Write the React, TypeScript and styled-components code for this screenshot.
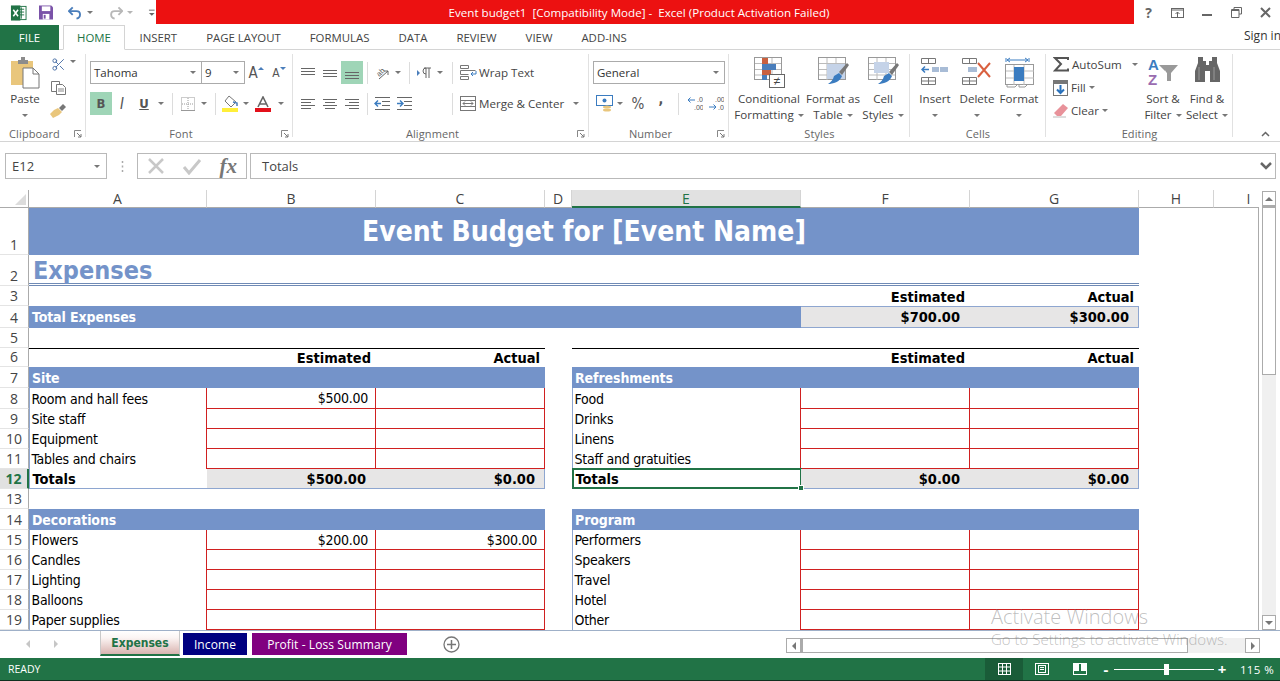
import React from "react";
import styled, { createGlobalStyle, css } from "styled-components";
import { Scissors } from "lucide-react";

const UI_FONT = `"Open Sans", "Noto Sans", sans-serif`;
const CELL_FONT = `"DejaVu Sans Condensed", "DejaVu Sans", sans-serif`;
const BAND = "#7493c9";
const RED = "#d02020";
const EDGE = "#8ea6d0";
const GREEN = "#217346";

const GlobalStyle = createGlobalStyle`
  html, body { margin: 0; padding: 0; background: #fff; overflow: hidden; }
  * { box-sizing: border-box; }
`;

const Window = styled.div`
  position: relative;
  width: 1280px;
  height: 681px;
  display: flex;
  flex-direction: column;
  overflow: hidden;
  font-family: ${UI_FONT};
  font-size: 11.6px;
  color: #444;
`;

/* title bar */
const TitleBar = styled.div`
  height: 25px;
  display: flex;
  align-items: stretch;
`;
const Qat = styled.div`
  width: 156px;
  display: flex;
  align-items: center;
`;
const RedTitle = styled.div`
  flex: 1;
  height: 24px;
  background: #ec1111;
  color: #fff;
  display: flex;
  align-items: center;
  justify-content: center;
  white-space: pre;
  padding-right: 12px;
`;
const WinControls = styled.div`
  width: 146px;
  display: flex;
  align-items: center;
  padding-left: 0;
`;

const Slot = styled.div<{ $w: number; $active?: boolean }>`
  width: ${(p) => p.$w}px;
  height: 23px;
  flex: none;
  display: flex;
  align-items: center;
  justify-content: center;
  ${(p) => p.$active && `background: #9fd5b7;`}
`;
const Caret = styled.span<{ $light?: boolean }>`
  display: inline-block;
  width: 0;
  height: 0;
  border-left: 3px solid transparent;
  border-right: 3px solid transparent;
  border-top: 3px solid ${(p) => (p.$light ? "#b5b5b5" : "#777")};
`;
const GrowCaret = styled.span<{ $up?: boolean }>`
  width: 0;
  height: 0;
  margin-bottom: 9px;
  border-left: 3px solid transparent;
  border-right: 3px solid transparent;
  ${(p) => (p.$up ? `border-bottom: 3px solid #4a7ebb;` : `border-top: 3px solid #4a7ebb;`)}
`;
const Sep = styled.span`
  width: 1px;
  height: 22px;
  background: #dcdcdc;
`;

/* ribbon tabs */
const TabRow = styled.div`
  height: 25px;
  display: flex;
  align-items: stretch;
  border-bottom: 1px solid #d4d4d4;
  font-size: 11.4px;
`;
const FileTab = styled.div`
  width: 59px;
  margin-right: 4px;
  background: ${GREEN};
  color: #fff;
  display: flex;
  align-items: center;
  justify-content: center;
  margin-bottom: -1px;
`;
const RibbonTab = styled.div<{ $on?: boolean }>`
  padding: 0 14.5px;
  display: flex;
  align-items: center;
  ${(p) =>
    p.$on &&
    css`
      color: ${GREEN};
      background: #fff;
      border: 1px solid #d4d4d4;
      border-bottom: 1px solid #fff;
      height: 25px;
      padding: 0;
      justify-content: center;
      width: 62px;
    `}
`;
const SignIn = styled.div`
  margin-left: auto;
  display: flex;
  align-items: center;
  color: #333;
  white-space: nowrap;
  width: 36px;
  margin-top: -4px;
  font-size: 12px;
`;

/* ribbon */
const Ribbon = styled.div`
  height: 92px;
  display: flex;
  border-bottom: 1px solid #d4d4d4;
  position: relative;
`;
const Group = styled.div<{ $w: number }>`
  width: ${(p) => p.$w}px;
  flex: none;
  display: flex;
  flex-direction: column;
  position: relative;
  &::after {
    content: "";
    position: absolute;
    right: 0;
    top: 4px;
    bottom: 4px;
    width: 1px;
    background: #e1e1e1;
  }
`;
const GroupBody = styled.div`
  height: 75px;
  display: flex;
`;
const GroupFooter = styled.div<{ $launch?: boolean }>`
  flex: 1;
  display: flex;
  align-items: center;
  justify-content: center;
  position: relative;
  color: #666;
  font-size: 11px;
  letter-spacing: 0.1px;
  padding-top: 2px;
  padding-right: ${(p) => (p.$launch ? 17 : 0)}px;
`;
const Launcher = styled.svg`
  position: absolute;
  right: 4px;
  top: 6px;
`;
const ToolRows = styled.div<{ $left?: number }>`
  display: flex;
  flex-direction: column;
  gap: 8px;
  padding: 11px 0 0 ${(p) => p.$left ?? 4}px;
`;
const ToolRow = styled.div`
  display: flex;
  align-items: center;
  height: 23px;
`;
const Combo = styled.div<{ $w: number }>`
  width: ${(p) => p.$w}px;
  height: 23px;
  border: 1px solid #ababab;
  display: flex;
  align-items: center;
  justify-content: space-between;
  padding: 0 5px 0 3px;
  color: #333;
  font-size: 11.5px;
  margin-right: -1px;
`;
const Spacer = styled.div<{ $w: number }>`
  width: ${(p) => p.$w}px;
  flex: none;
`;
const ToolLabel = styled.span`
  white-space: nowrap;
  color: #444;
`;
const Glyph = styled.span<{ $bold?: boolean; $italic?: boolean; $under?: boolean; $size?: number; $raise?: number }>`
  font-family: ${CELL_FONT};
  font-size: ${(p) => p.$size ?? 13}px;
  font-weight: ${(p) => (p.$bold ? 700 : 400)};
  font-style: ${(p) => (p.$italic ? "italic" : "normal")};
  text-decoration: ${(p) => (p.$under ? "underline" : "none")};
  color: #555;
  margin-bottom: ${(p) => p.$raise ?? 0}px;
`;
const BigButton = styled.div<{ $w: number }>`
  width: ${(p) => p.$w}px;
  flex: none;
  display: flex;
  flex-direction: column;
  align-items: center;
  padding-top: 7px;
  white-space: nowrap;
`;
const BigIcon = styled.div`
  height: 33px;
  display: flex;
  align-items: flex-start;
  justify-content: center;
  margin-bottom: 1px;
`;
const BigLine = styled.div`
  height: 16px;
  line-height: 16px;
  display: flex;
  align-items: center;
  gap: 4px;
  color: #444;
`;
const MiniStack = styled.div<{ $w: number }>`
  width: ${(p) => p.$w}px;
  flex: none;
  display: flex;
  flex-direction: column;
  gap: 9px;
  padding-top: 7px;
  align-items: center;
`;
const EditStack = styled.div<{ $w: number }>`
  width: ${(p) => p.$w}px;
  flex: none;
  padding: 3px 0 0 7px;
  display: flex;
  flex-direction: column;
`;
const EditRow = styled.div`
  height: 23px;
  display: flex;
  align-items: center;
  gap: 3px;
  svg {
    flex: none;
  }
`;
const Collapse = styled.svg`
  position: absolute;
  left: 1261px;
  top: 81px;
`;

/* formula bar */
const FormulaBar = styled.div`
  height: 48px;
  display: flex;
  align-items: flex-start;
  padding: 11px 4px 0 5px;
`;
const NameBox = styled.div`
  width: 102px;
  height: 26px;
  border: 1px solid #b9b9b9;
  display: flex;
  align-items: center;
  justify-content: space-between;
  padding: 0 6px 0 6px;
  color: #444;
  font-size: 13px;
`;
const Dots = styled.div`
  width: 30px;
  height: 26px;
  display: flex;
  align-items: center;
  justify-content: center;
`;
const FxBox = styled.div`
  width: 110px;
  height: 26px;
  border: 1px solid #b9b9b9;
  display: flex;
  align-items: center;
  justify-content: space-between;
  padding: 0 9px 0 9px;
  margin-right: 3px;
`;
const FxText = styled.span`
  font-family: "Liberation Serif", serif;
  font-style: italic;
  font-weight: 700;
  font-size: 21px;
  color: #777;
`;
const FormulaInput = styled.div`
  flex: 1;
  height: 26px;
  border: 1px solid #b9b9b9;
  display: flex;
  align-items: center;
  justify-content: space-between;
  padding: 0 2px 0 11px;
  font-size: 13px;
  color: #444;
`;

/* sheet */
const SheetArea = styled.div`
  height: 440px;
  display: flex;
`;
const SheetGrid = styled.div`
  width: 1259px;
  flex: none;
  position: relative;
  display: grid;
  grid-template-columns: 29px 178px 169px 169px 27px 229px 169px 169px 75px 70px;
  grid-template-rows: 18px 47px 31px 20px 22px 20px 19px 21px 21px 20px 20px 20px 20px 20px 21px 20px 20px 20px 20px 20px;
  overflow: hidden;
  &::after {
    content: "";
    position: absolute;
    right: 0;
    top: 17px;
    bottom: 0;
    width: 1px;
    background: #ababab;
  }
`;
const Corner = styled.div`
  border-bottom: 1px solid #ababab;
  border-right: 1px solid #ababab;
  display: flex;
  align-items: flex-end;
  justify-content: flex-end;
  padding: 0 2px 2px 0;
`;
const ColHead = styled.div<{ $on?: boolean }>`
  display: flex;
  align-items: center;
  justify-content: center;
  font-size: 14px;
  color: #444;
  border-right: 1px solid #d4d4d4;
  border-bottom: 1px solid #ababab;
  ${(p) =>
    p.$on &&
    css`
      background: #e1e1e1;
      color: ${GREEN};
      border-bottom: 2px solid ${GREEN};
    `}
`;
const RowHead = styled.div<{ $on?: boolean }>`
  display: flex;
  align-items: flex-end;
  justify-content: center;
  font-size: 14px;
  line-height: 19px;
  color: #444;
  border-right: 1px solid #ababab;
  border-bottom: 1px solid #e4e4e4;
  ${(p) =>
    p.$on &&
    css`
      background: #e1e1e1;
      color: ${GREEN};
      font-weight: 700;
      border-right: 2px solid ${GREEN};
    `}
`;

type Kind =
  | "blank"
  | "title"
  | "heading"
  | "head"
  | "headTop"
  | "ruled"
  | "band"
  | "summary"
  | "summaryEnd"
  | "label"
  | "data"
  | "rowTotal"
  | "sum"
  | "sumEnd";

const kinds: Record<Kind, ReturnType<typeof css>> = {
  blank: css``,
  title: css`
    background: ${BAND};
    color: #fff;
    font-weight: 700;
    font-size: 28px;
    justify-content: center;
  `,
  heading: css`
    color: ${BAND};
    font-weight: 700;
    font-size: 25px;
    padding: 2px 0 0 4px;
    align-items: center;
    border-bottom: 3px double #6f8ab5;
  `,
  head: css`
    font-size: 14.5px;
    font-weight: 700;
    justify-content: flex-end;
    padding: 1px 5px 0 0;
  `,
  headTop: css`
    font-size: 14.5px;
    font-weight: 700;
    justify-content: flex-end;
    padding-right: 5px;
    border-top: 1px solid #000;
  `,
  ruled: css`
    border-top: 1px solid #000;
  `,
  band: css`
    background: ${BAND};
    color: #fff;
    font-size: 14px;
    font-weight: 700;
    letter-spacing: -0.1px;
    padding-left: 3px;
  `,
  summary: css`
    background: #e7e6e6;
    font-size: 14.5px;
    font-weight: 700;
    justify-content: flex-end;
    padding-right: 10px;
    border-bottom: 1px solid ${EDGE};
    border-top: 1px solid ${EDGE};
  `,
  summaryEnd: css`
    background: #e7e6e6;
    font-size: 14.5px;
    font-weight: 700;
    justify-content: flex-end;
    padding-right: 9px;
    border-bottom: 1px solid ${EDGE};
    border-right: 1px solid ${EDGE};
    border-top: 1px solid ${EDGE};
  `,
  label: css`
    letter-spacing: -0.25px;
    padding-left: 1.5px;
    border-left: 1px solid ${EDGE};
    border-right: 1px solid ${RED};
  `,
  data: css`
    letter-spacing: -0.25px;
    justify-content: flex-end;
    padding-right: 7px;
    border-right: 1px solid ${RED};
    border-bottom: 1px solid ${RED};
  `,
  rowTotal: css`
    font-size: 14.5px;
    font-weight: 700;
    padding-left: 2.5px;
    border-left: 1px solid ${EDGE};
    border-bottom: 1px solid ${EDGE};
  `,
  sum: css`
    background: #e7e6e6;
    font-size: 14.5px;
    font-weight: 700;
    justify-content: flex-end;
    padding-right: 10px;
    border-bottom: 1px solid ${EDGE};
  `,
  sumEnd: css`
    background: #e7e6e6;
    font-size: 14.5px;
    font-weight: 700;
    justify-content: flex-end;
    padding-right: 9px;
    border-bottom: 1px solid ${EDGE};
    border-right: 1px solid ${EDGE};
  `,
};

const Cell = styled.div<{ $kind: Kind; $span?: number; $selected?: boolean }>`
  grid-column: span ${(p) => p.$span ?? 1};
  display: flex;
  align-items: center;
  min-width: 0;
  position: relative;
  font-family: ${CELL_FONT};
  font-size: 14px;
  color: #000;
  white-space: nowrap;
  ${(p) => kinds[p.$kind]}
  ${(p) =>
    p.$selected &&
    css`
      &::after {
        content: "";
        position: absolute;
        inset: -1px -1px -1px -1px;
        border: 2px solid ${GREEN};
      }
    `}
`;
const FillHandle = styled.span`
  position: absolute;
  right: -3px;
  bottom: -3px;
  width: 6px;
  height: 6px;
  background: ${GREEN};
  border: 1px solid #fff;
  z-index: 2;
`;

const VScroll = styled.div`
  flex: 1;
  display: flex;
  flex-direction: column;
  padding: 1px 4px 0 3px;
`;
const ScrollBtn = styled.div`
  height: 15px;
  border: 1px solid #ababab;
  display: flex;
  align-items: center;
  justify-content: center;
  flex: none;
`;
const VThumb = styled.div`
  height: 169px;
  border: 1px solid #ababab;
  border-top-width: 2px;
  flex: none;
`;
const VTrack = styled.div`
  flex: 1;
  background: #f0f0f0;
`;
const Tri = styled.span<{ $dir: "up" | "down" | "left" | "right" }>`
  width: 0;
  height: 0;
  ${(p) =>
    p.$dir === "up" &&
    `border-left:4px solid transparent;border-right:4px solid transparent;border-bottom:4px solid #777;`}
  ${(p) =>
    p.$dir === "down" &&
    `border-left:4px solid transparent;border-right:4px solid transparent;border-top:4px solid #777;`}
  ${(p) =>
    p.$dir === "left" &&
    `border-top:4px solid transparent;border-bottom:4px solid transparent;border-right:4px solid #777;`}
  ${(p) =>
    p.$dir === "right" &&
    `border-top:4px solid transparent;border-bottom:4px solid transparent;border-left:4px solid #777;`}
`;

/* sheet tabs */
const TabsBar = styled.div`
  height: 28px;
  display: flex;
  align-items: flex-start;
  border-top: 1px solid #9fb0c8;
  background: #fff;
`;
const TabNav = styled.div`
  width: 100px;
  height: 26px;
  flex: none;
  display: flex;
  align-items: center;
  padding-left: 26px;
  gap: 24px;
`;
const NavArrow = styled.span<{ $dir: "left" | "right" }>`
  width: 0;
  height: 0;
  border-top: 4px solid transparent;
  border-bottom: 4px solid transparent;
  ${(p) =>
    p.$dir === "left" ? `border-right: 4px solid #c6c6c6;` : `border-left: 4px solid #c6c6c6;`}
`;
const SheetTab = styled.div<{ $bg: string; $w: number; $gap: number }>`
  width: ${(p) => p.$w}px;
  margin-right: ${(p) => p.$gap}px;
  height: 22px;
  margin-top: 2px;
  flex: none;
  background: ${(p) => p.$bg};
  color: #fff;
  display: flex;
  align-items: center;
  justify-content: center;
  font-size: 12px;
  letter-spacing: 0.1px;
`;
const ActiveSheetTab = styled.div`
  width: 80px;
  margin-right: 3px;
  height: 25px;
  flex: none;
  background: linear-gradient(#fff 0%, #fbf4f3 30%, #d9b4b0 100%);
  color: ${GREEN};
  border: 1px solid #c9c9c9;
  border-top: none;
  border-bottom: 2px solid ${GREEN};
  display: flex;
  align-items: center;
  justify-content: center;
  font-family: ${CELL_FONT};
  font-size: 12px;
  font-weight: 700;
`;
const AddSheet = styled.div`
  width: 36px;
  margin-left: 26px;
  height: 26px;
  flex: none;
  display: flex;
  align-items: center;
  justify-content: center;
`;
const HScroll = styled.div`
  margin-left: auto;
  margin-top: 7px;
  width: 474px;
  margin-right: 20px;
  height: 15px;
  display: flex;
`;
const HBtn = styled.div`
  width: 15px;
  height: 15px;
  border: 1px solid #ababab;
  flex: none;
  display: flex;
  align-items: center;
  justify-content: center;
`;
const HThumb = styled.div`
  width: 387px;
  border: 1px solid #ababab;
  border-left-width: 2px;
  flex: none;
`;
const HTrack = styled.div`
  flex: 1;
  background: #f0f0f0;
`;

/* status bar */
const StatusBar = styled.div`
  flex: 1;
  background: ${GREEN};
  color: #fff;
  display: flex;
  align-items: center;
  padding-left: 8px;
  font-size: 10.5px;
  border-bottom: 1px solid #10301f;
`;
const StatusRight = styled.div`
  margin-left: auto;
  display: flex;
  align-items: center;
  height: 100%;
`;
const ViewBtn = styled.div<{ $on?: boolean }>`
  width: 38px;
  height: 100%;
  display: flex;
  align-items: center;
  justify-content: center;
  ${(p) => p.$on && `background: #1a5c38;`}
`;
const ZoomTrack = styled.div`
  width: 100px;
  height: 1px;
  background: #fff;
  position: relative;
  margin: 0 2px;
`;
const ZoomThumb = styled.span`
  position: absolute;
  left: 50px;
  top: -5px;
  width: 5px;
  height: 11px;
  background: #fff;
`;
const ZoomSign = styled.span`
  width: 12px;
  text-align: center;
  font-size: 15px;
  font-weight: 700;
  line-height: 1;
`;
const ZoomValue = styled.span`
  width: 46px;
  margin-left: 6px;
  text-align: center;
  font-size: 11.5px;
  letter-spacing: 0.4px;
`;

const Watermark = styled.div`
  position: absolute;
  left: 991px;
  top: 604px;
  pointer-events: none;
  color: rgba(110, 110, 110, 0.45);
  font-weight: 300;
  white-space: nowrap;
`;
const WatermarkTitle = styled.div`
  font-size: 20px;
  line-height: 25px;
`;
const WatermarkSub = styled.div`
  font-size: 15px;
  line-height: 20px;
`;

/* drawings */
const LinesIcon = ({ lines, w = 16, h = 12, color = "#666" }: { lines: number[][]; w?: number; h?: number; color?: string }) => (
  <svg width={w} height={h} viewBox={`0 0 ${w} ${h}`}>
    {lines.map(([a, b, y], i) => (
      <line key={i} x1={a} x2={b} y1={y + 0.5} y2={y + 0.5} stroke={color} />
    ))}
  </svg>
);

const ExcelLogo = () => (
  <svg width="18" height="18" viewBox="0 0 18 18">
    <rect x="6" y="2" width="11" height="14" fill="#fff" stroke={GREEN} />
    <path d="M9 5h6M9 8h6M9 11h6M12 3v12" stroke={GREEN} />
    <rect x="1" y="1" width="10" height="16" fill={GREEN} />
    <path d="M3.5 5.5l5 7M8.5 5.5l-5 7" stroke="#fff" strokeWidth="1.6" />
  </svg>
);
const SaveIcon = () => (
  <svg width="15" height="15" viewBox="0 0 15 15">
    <path d="M0 0h13l2 2v13H0z" fill="#7a52a8" />
    <rect x="3" y="1" width="9" height="5" fill="#fff" />
    <rect x="4" y="9" width="7" height="6" fill="#fff" />
    <rect x="5" y="10" width="2" height="4" fill="#7a52a8" />
  </svg>
);
const UndoIcon = ({ color, flip }: { color: string; flip?: boolean }) => (
  <svg width="15" height="14" viewBox="0 0 15 14" style={flip ? { transform: "scaleX(-1)" } : undefined}>
    <path d="M5 1L1 5l4 4" fill="none" stroke={color} strokeWidth="2" />
    <path d="M1.5 5H9c5 0 5 7 0 8" fill="none" stroke={color} strokeWidth="2" />
  </svg>
);
const QatMore = () => (
  <svg width="8" height="8" viewBox="0 0 8 8">
    <path d="M1 1h6" stroke="#666" />
    <path d="M1 4h6l-3 3z" fill="#666" />
  </svg>
);
const HelpGlyph = styled.span`
  font-weight: 700;
  font-size: 14px;
  color: #666;
`;
const PasteIcon = () => (
  <svg width="31" height="32" viewBox="0 0 31 32">
    <rect x="1" y="4" width="22" height="24" fill="#e9c67c" />
    <path d="M8 3h3V0h4v3h3v4H8z" fill="#8c8c8c" />
    <path d="M13 11h10l6 6v14H13z" fill="#fff" stroke="#777" />
    <path d="M23 11v6h6" fill="none" stroke="#777" />
  </svg>
);
const CopyIcon = () => (
  <svg width="15" height="14" viewBox="0 0 15 14">
    <path d="M.5.5h8v10h-8z" fill="#fff" stroke="#777" />
    <path d="M5.5 3.5h6l3 3v7h-9z" fill="#fff" stroke="#777" />
    <path d="M7 8h6M7 10h6" stroke="#888" />
  </svg>
);
const BrushIcon = () => (
  <svg width="16" height="14" viewBox="0 0 16 14">
    <path d="M9 4l4-4 3 3-4 4z" fill="#777" />
    <path d="M8 4l4 4-3 3-6 3-3-4 4-4z" fill="#e9c67c" />
  </svg>
);
const BordersIcon = () => (
  <svg width="14" height="14" viewBox="0 0 14 14">
    <rect x=".5" y=".5" width="13" height="13" fill="none" stroke="#999" strokeDasharray="1 1" />
    <path d="M7 1v12M1 7h12" stroke="#999" strokeDasharray="1 1" />
    <path d="M0 13.5h14" stroke="#999" />
  </svg>
);
const FillIcon = () => (
  <svg width="17" height="17" viewBox="0 0 17 17">
    <path d="M7 1l7 6-5 5-6-6z" fill="#fff" stroke="#777" />
    <path d="M11 7l4 1v3" fill="none" stroke="#4a7ebb" strokeWidth="1.5" />
    <rect x="0" y="13" width="16" height="4" fill="#ffef3a" />
  </svg>
);
const FontColorIcon = () => (
  <svg width="16" height="16" viewBox="0 0 16 16">
    <path d="M3 11L8 1l5 10M5 8h6" fill="none" stroke="#666" strokeWidth="1.6" />
    <rect x="0" y="12" width="16" height="4" fill="#e3101a" />
  </svg>
);
const OrientIcon = () => (
  <svg width="17" height="16" viewBox="0 0 17 16">
    <text x="3" y="10" fontSize="7.5" fill="#555" fontFamily="Liberation Sans" transform="rotate(-45 7 7)">ab</text>
    <path d="M6 14L15 6M15 6v4M15 6h-4" fill="none" stroke="#666" />
  </svg>
);
const RtlIcon = () => (
  <svg width="14" height="12" viewBox="0 0 14 12">
    <path d="M0 3l3 3-3 3z" fill="#4a7ebb" />
    <path d="M7 1h7M9 1v10M12 1v10M9 1a3 3 0 0 0 0 6" fill="none" stroke="#666" />
  </svg>
);
const IndentIcon = ({ flip }: { flip?: boolean }) => (
  <svg width="16" height="13" viewBox="0 0 16 13">
    <path d="M1 .5h15M8 4.500h8M8 8.500h8M1 12.500h15" stroke="#666" />
    {flip ? (
      <path d="M7 6.500H1M4 3.500l3 3-3 3" fill="none" stroke="#3b7cc0" strokeWidth="1.4" />
    ) : (
      <path d="M7 6.500H1M4 3.500l-3 3 3 3" fill="none" stroke="#3b7cc0" strokeWidth="1.4" />
    )}
  </svg>
);
const WrapIcon = () => (
  <svg width="17" height="15" viewBox="0 0 17 15">
    <path d="M.5.5h8v3h-8zM.5 5.500h15M.5 5.500v4h8M.5 11.500h8v3h-8z" fill="none" stroke="#777" />
    <path d="M16 6v3h-5M13 7l-2 2 2 2" fill="none" stroke="#3b7cc0" />
  </svg>
);
const MergeIcon = () => (
  <svg width="16" height="15" viewBox="0 0 16 15">
    <rect x=".5" y=".5" width="15" height="14" fill="none" stroke="#777" />
    <path d="M1 4.500h14M1 10.500h14M3 7.500h10M3 7.500l2-2M3 7.500l2 2M13 7.500l-2-2M13 7.500l-2 2" fill="none" stroke="#777" />
  </svg>
);
const AccountingIcon = () => (
  <svg width="17" height="18" viewBox="0 0 17 18">
    <rect x=".5" y=".5" width="16" height="10" fill="#fff" stroke="#3b7cc0" />
    <circle cx="8.500" cy="5.500" r="2" fill="#3b7cc0" />
    <ellipse cx="11" cy="12" rx="4" ry="1.500" fill="#e9c67c" />
    <ellipse cx="11" cy="15" rx="4" ry="1.500" fill="#e9c67c" />
  </svg>
);
const DecimalIcon = ({ flip }: { flip?: boolean }) => (
  <svg width="15" height="16" viewBox="0 0 15 16" fontSize="7" fontFamily="Liberation Sans" fill="#555">
    {flip ? (
      <>
        <text x="6" y="6">.00</text>
        <text x="9" y="14">.0</text>
        <path d="M0 11h7M4.500 8.500l2.500 2.500-2.500 2.500" fill="none" stroke="#3b7cc0" />
      </>
    ) : (
      <>
        <text x="9" y="6">.0</text>
        <text x="6" y="14">.00</text>
        <path d="M0 4h7M2.500 1.500L0 4l2.500 2.500" fill="none" stroke="#3b7cc0" />
      </>
    )}
  </svg>
);
const SheetLines = () => (
  <>
    <rect x=".5" y=".5" width="27" height="22" fill="#fff" stroke="#999" />
    <path d="M9 1v22M18 1v22M1 6.500h26M1 12.500h26M1 18h26" stroke="#bbb" />
  </>
);
const ConditionalIcon = () => (
  <svg width="31" height="31" viewBox="0 0 31 31">
    <SheetLines />
    <rect x="8" y="1" width="6" height="6" fill="#c9603f" />
    <rect x="8" y="7" width="14" height="6" fill="#4a7ebb" />
    <rect x="8" y="13" width="9" height="5" fill="#c9603f" />
    <rect x="8" y="18" width="5" height="5" fill="#4a7ebb" />
    <rect x="15.500" y="17.500" width="15" height="13" fill="#fff" stroke="#666" />
    <text x="23" y="28" fontSize="12" textAnchor="middle" fill="#444" fontFamily="Liberation Sans">≠</text>
  </svg>
);
const TableBrushIcon = ({ tall }: { tall?: boolean }) => (
  <svg width="31" height="31" viewBox="0 0 31 31">
    <SheetLines />
    <rect x={tall ? 6 : 9} y={tall ? 5 : 7} width={tall ? 15 : 18} height={tall ? 11 : 15} fill="#c5d3e8" />
    <path d="M21 15l8-9 2 2-7 10z" fill="#777" />
    <path d="M21 16l3 3c-2 6-9 8-14 8 3-2 5-4 6-8z" fill="#3b7cc0" />
  </svg>
);
const InsertIcon = () => (
  <svg width="28" height="28" viewBox="0 0 28 28">
    <path d="M.5 1.500h14v5h-14zM7.500 1.500v5" fill="none" stroke="#777" />
    <path d="M.5 20.500h14v7h-14zM7.500 20.500v7M.5 24h14" fill="none" stroke="#777" />
    <rect x="11" y="10" width="7" height="5" fill="#a8bcd6" />
    <rect x="19" y="10" width="8" height="5" fill="#a8bcd6" />
    <path d="M8 12.500H1M4 9.500l-3 3 3 3" fill="none" stroke="#3b7cc0" strokeWidth="1.5" />
  </svg>
);
const DeleteIcon = () => (
  <svg width="30" height="28" viewBox="0 0 30 28">
    <path d="M.5 1.500h14v5h-14zM7.500 1.500v5" fill="none" stroke="#777" />
    <path d="M.5 20.500h14v7h-14zM7.500 20.500v7M.5 24h14" fill="none" stroke="#777" />
    <rect x="6" y="10" width="9" height="5" fill="#a8bcd6" />
    <path d="M16 6l12 14M28 6L16 20" stroke="#d9603f" strokeWidth="2" />
  </svg>
);
const FormatIcon = () => (
  <svg width="29" height="31" viewBox="0 0 29 31">
    <path d="M1 1v4M24 1v4M2 3h21M2 3l3-2M2 3l3 2M23 3l-3-2M23 3l-3 2" fill="none" stroke="#3b7cc0" />
    <rect x=".5" y="7.500" width="28" height="20" fill="#fff" stroke="#999" />
    <path d="M9 8v20M19 8v20M1 14h28M1 21h28" stroke="#bbb" />
    <rect x="9" y="10" width="10" height="14" fill="#3b7cc0" />
    <path d="M2 28v2h8l2-2M14 28v2h6l2-2" fill="none" stroke="#999" />
  </svg>
);
const SigmaIcon = () => (
  <svg width="16" height="15" viewBox="0 0 16 15">
    <path d="M15 3V1H2l6 6-6 6.500h13v-2" fill="none" stroke="#555" strokeWidth="2" />
  </svg>
);
const FillDownIcon = () => (
  <svg width="15" height="16" viewBox="0 0 15 16">
    <rect x=".5" y=".5" width="14" height="15" fill="#fff" stroke="#777" />
    <rect x="0" y="0" width="15" height="4" fill="#777" />
    <path d="M7.500 5v8M4 9.500l3.500 3.500L11 9.500" fill="none" stroke="#2a72bc" strokeWidth="2" />
  </svg>
);
const EraserIcon = () => (
  <svg width="15" height="14" viewBox="0 0 15 14">
    <path d="M10 0l5 4-7 8H4L1 9z" fill="#e8929a" />
    <path d="M0 13h13" stroke="#bbb" />
  </svg>
);
const SortIcon = () => (
  <svg width="32" height="30" viewBox="0 0 32 30" fontFamily="Liberation Sans" fontWeight="700" fontSize="15">
    <text x="1" y="13" fill="#3b7cc0">A</text>
    <text x="1" y="28" fill="#9a6cb0">Z</text>
    <path d="M12 8h19l-7 8v8h-4v-8z" fill="#999" />
    <path d="M18 16v8h1V13z" fill="#fff" />
  </svg>
);
const BinocularsIcon = () => (
  <svg width="27" height="25" viewBox="0 0 27 25">
    <path d="M4 0h5v4h3v4H15V4h3V0h5v6l3 8v11H16V14h-5v11H1V14l3-8z" fill="#666" />
    <path d="M5 10v13M20 10v13" stroke="#999" />
  </svg>
);
const LauncherIcon = () => (
  <Launcher width="8" height="8" viewBox="0 0 8 8">
    <path d="M.5 7V.5H7" fill="none" stroke="#888" />
    <path d="M3 3l4 4M7 4v3H4" fill="none" stroke="#777" />
  </Launcher>
);

const GridViewIcon = () => (
  <svg width="13" height="12" viewBox="0 0 13 12">
    <rect x=".5" y=".5" width="12" height="11" fill="none" stroke="#fff" />
    <path d="M4.500 1v10M8.500 1v10M1 4h11M1 8h11" stroke="#fff" />
  </svg>
);
const PageViewIcon = () => (
  <svg width="14" height="12" viewBox="0 0 14 12">
    <rect x=".5" y=".5" width="13" height="11" fill="none" stroke="#fff" />
    <rect x="3.500" y="2.500" width="7" height="7" fill="none" stroke="#fff" />
    <path d="M5 4.500h4M5 6.500h4" stroke="#fff" />
  </svg>
);
const BreakViewIcon = () => (
  <svg width="14" height="12" viewBox="0 0 14 12">
    <rect x=".5" y=".5" width="13" height="11" fill="none" stroke="#fff" />
    <rect x="1" y="1" width="5" height="7" fill="#fff" />
    <rect x="8" y="1" width="5" height="7" fill="#fff" />
  </svg>
);

/* sheet data */
type CellDef = { t?: string; k: Kind; span?: number; selected?: boolean };
type RowDef = { n: number; on?: boolean; cells: CellDef[] };

const blank: CellDef = { k: "blank" };

const lineRow = (n: number, left: string, right: string, leftVal = "", leftVal2 = ""): RowDef => ({
  n,
  cells: [
    { t: left, k: "label" },
    { t: leftVal, k: "data" },
    { t: leftVal2, k: "data" },
    blank,
    { t: right, k: "label" },
    { k: "data" },
    { k: "data" },
    blank,
    blank,
  ],
});

const rows: RowDef[] = [
  { n: 1, cells: [{ t: "Event Budget for [Event Name]", k: "title", span: 7 }, blank, blank] },
  { n: 2, cells: [{ t: "Expenses", k: "heading", span: 7 }, blank, blank] },
  { n: 3, cells: [{ k: "blank", span: 5 }, { t: "Estimated", k: "head" }, { t: "Actual", k: "head" }, blank, blank] },
  {
    n: 4,
    cells: [
      { t: "Total Expenses", k: "band", span: 5 },
      { t: "$700.00", k: "summary" },
      { t: "$300.00", k: "summaryEnd" },
      blank,
      blank,
    ],
  },
  { n: 5, cells: [{ k: "blank", span: 9 }] },
  {
    n: 6,
    cells: [
      { k: "ruled" },
      { t: "Estimated", k: "headTop" },
      { t: "Actual", k: "headTop" },
      blank,
      { k: "ruled" },
      { t: "Estimated", k: "headTop" },
      { t: "Actual", k: "headTop" },
      blank,
      blank,
    ],
  },
  {
    n: 7,
    cells: [{ t: "Site", k: "band", span: 3 }, blank, { t: "Refreshments", k: "band", span: 3 }, blank, blank],
  },
  lineRow(8, "Room and hall fees", "Food", "$500.00"),
  lineRow(9, "Site staff", "Drinks"),
  lineRow(10, "Equipment", "Linens"),
  lineRow(11, "Tables and chairs", "Staff and gratuities"),
  {
    n: 12,
    on: true,
    cells: [
      { t: "Totals", k: "rowTotal" },
      { t: "$500.00", k: "sum" },
      { t: "$0.00", k: "sumEnd" },
      blank,
      { t: "Totals", k: "rowTotal", selected: true },
      { t: "$0.00", k: "sum" },
      { t: "$0.00", k: "sumEnd" },
      blank,
      blank,
    ],
  },
  { n: 13, cells: [{ k: "blank", span: 9 }] },
  {
    n: 14,
    cells: [{ t: "Decorations", k: "band", span: 3 }, blank, { t: "Program", k: "band", span: 3 }, blank, blank],
  },
  lineRow(15, "Flowers", "Performers", "$200.00", "$300.00"),
  lineRow(16, "Candles", "Speakers"),
  lineRow(17, "Lighting", "Travel"),
  lineRow(18, "Balloons", "Hotel"),
  lineRow(19, "Paper supplies", "Other"),
];

const columns = ["A", "B", "C", "D", "E", "F", "G", "H", "I"];

const BigTool = ({ w, icon, top, bottom, caret }: { w: number; icon: React.ReactNode; top: string; bottom?: string; caret?: boolean }) => (
  <BigButton $w={w}>
    <BigIcon>{icon}</BigIcon>
    <BigLine>{top}</BigLine>
    <BigLine>
      {bottom}
      {caret && <Caret />}
    </BigLine>
  </BigButton>
);

const App = () => (
  <Window>
    <GlobalStyle />
    <TitleBar>
      <Qat>
        <Slot $w={10} />
        <ExcelLogo />
        <Slot $w={12} />
        <SaveIcon />
        <Slot $w={15} />
        <UndoIcon color="#4a7ebb" />
        <Slot $w={15}>
          <Caret />
        </Slot>
        <Slot $w={12} />
        <UndoIcon color="#b8b8b8" flip />
        <Slot $w={14}>
          <Caret $light />
        </Slot>
        <Slot $w={11} />
        <QatMore />
      </Qat>
      <RedTitle>{"Event budget1  [Compatibility Mode] -  Excel (Product Activation Failed)"}</RedTitle>
      <WinControls>
        <Slot $w={29}>
          <HelpGlyph>?</HelpGlyph>
        </Slot>
        <Slot $w={29}>
          <svg width="13" height="10" viewBox="0 0 13 10">
            <rect x=".5" y=".5" width="12" height="9" fill="none" stroke="#666" />
            <path d="M1 2h11" stroke="#666" />
            <path d="M6.500 9V4M4.500 6l2-2 2 2" fill="none" stroke="#666" />
          </svg>
        </Slot>
        <Slot $w={30}>
          <svg width="10" height="10" viewBox="0 0 10 10">
            <rect x="0" y="6" width="10" height="2" fill="#666" />
          </svg>
        </Slot>
        <Slot $w={29}>
          <svg width="11" height="11" viewBox="0 0 11 11">
            <path d="M3 2.500V.5h7.500V7H8M.5 2.500H8V10.500H.5z" fill="none" stroke="#666" />
            <path d="M.5 3.500H8" stroke="#666" />
          </svg>
        </Slot>
        <Slot $w={29}>
          <svg width="11" height="11" viewBox="0 0 11 11">
            <path d="M1 1l9 9M10 1l-9 9" stroke="#666" strokeWidth="2" />
          </svg>
        </Slot>
      </WinControls>
    </TitleBar>

    <TabRow>
      <FileTab>FILE</FileTab>
      <RibbonTab $on>HOME</RibbonTab>
      {["INSERT", "PAGE LAYOUT", "FORMULAS", "DATA", "REVIEW", "VIEW", "ADD-INS"].map((t) => (
        <RibbonTab key={t}>{t}</RibbonTab>
      ))}
      <SignIn>Sign in</SignIn>
    </TabRow>

    <Ribbon>
      <Group $w={86}>
        <GroupBody>
          <BigButton $w={50}>
            <BigIcon>
              <PasteIcon />
            </BigIcon>
            <BigLine>Paste</BigLine>
            <BigLine>
              <Caret />
            </BigLine>
          </BigButton>
          <MiniStack $w={16}>
            <Scissors size={15} color="#4a6fa5" strokeWidth={1.5} />
            <CopyIcon />
            <BrushIcon />
          </MiniStack>
          <Slot $w={14}>
            <Caret />
          </Slot>
        </GroupBody>
        <GroupFooter $launch>
          Clipboard
          <LauncherIcon />
        </GroupFooter>
      </Group>

      <Group $w={207}>
        <GroupBody>
          <ToolRows>
            <ToolRow>
              <Combo $w={112}>
                Tahoma
                <Caret />
              </Combo>
              <Combo $w={44}>
                9
                <Caret />
              </Combo>
              <Slot $w={24}>
                <Glyph $size={15}>A</Glyph>
                <GrowCaret $up />
              </Slot>
              <Slot $w={22}>
                <Glyph $size={12}>A</Glyph>
                <GrowCaret />
              </Slot>
            </ToolRow>
            <ToolRow>
              <Slot $w={22} $active>
                <Glyph $bold>B</Glyph>
              </Slot>
              <Slot $w={20}>
                <Glyph $italic $size={15}>
                  I
                </Glyph>
              </Slot>
              <Slot $w={24}>
                <Glyph $under $bold>
                  U
                </Glyph>
              </Slot>
              <Slot $w={10}>
                <Caret />
              </Slot>
              <Slot $w={12}>
                <Sep />
              </Slot>
              <Slot $w={20}>
                <BordersIcon />
              </Slot>
              <Slot $w={12}>
                <Caret />
              </Slot>
              <Slot $w={10}>
                <Sep />
              </Slot>
              <Slot $w={20}>
                <FillIcon />
              </Slot>
              <Slot $w={12}>
                <Caret />
              </Slot>
              <Slot $w={22}>
                <FontColorIcon />
              </Slot>
              <Slot $w={14}>
                <Caret />
              </Slot>
            </ToolRow>
          </ToolRows>
        </GroupBody>
        <GroupFooter $launch>
          Font
          <LauncherIcon />
        </GroupFooter>
      </Group>

      <Group $w={296}>
        <GroupBody>
          <ToolRows>
            <ToolRow>
              <Slot $w={22}>
                <LinesIcon lines={[[1, 15, 1], [1, 15, 4], [1, 15, 7]]} />
              </Slot>
              <Slot $w={22}>
                <LinesIcon lines={[[1, 15, 3], [1, 15, 6], [1, 15, 9]]} />
              </Slot>
              <Slot $w={22} $active>
                <LinesIcon lines={[[1, 15, 5], [1, 15, 8], [1, 15, 11]]} />
              </Slot>
              <Slot $w={8}>
                <Sep />
              </Slot>
              <Slot $w={21}>
                <OrientIcon />
              </Slot>
              <Slot $w={11}>
                <Caret />
              </Slot>
              <Slot $w={12}>
                <Sep />
              </Slot>
              <Slot $w={18}>
                <RtlIcon />
              </Slot>
              <Slot $w={14}>
                <Caret />
              </Slot>
              <Slot $w={10}>
                <Sep />
              </Slot>
              <Slot $w={22}>
                <WrapIcon />
              </Slot>
              <ToolLabel>Wrap Text</ToolLabel>
            </ToolRow>
            <ToolRow>
              <Slot $w={22}>
                <LinesIcon lines={[[1, 15, 1], [1, 11, 4], [1, 15, 7], [1, 11, 10]]} />
              </Slot>
              <Slot $w={22}>
                <LinesIcon lines={[[1, 15, 1], [3, 13, 4], [1, 15, 7], [3, 13, 10]]} />
              </Slot>
              <Slot $w={22}>
                <LinesIcon lines={[[1, 15, 1], [5, 15, 4], [1, 15, 7], [5, 15, 10]]} />
              </Slot>
              <Slot $w={8}>
                <Sep />
              </Slot>
              <Slot $w={22}>
                <IndentIcon />
              </Slot>
              <Slot $w={22}>
                <IndentIcon flip />
              </Slot>
              <Spacer $w={32} />
              <Slot $w={10}>
                <Sep />
              </Slot>
              <Slot $w={22}>
                <MergeIcon />
              </Slot>
              <ToolLabel>Merge &amp; Center</ToolLabel>
              <Slot $w={24}>
                <Caret />
              </Slot>
            </ToolRow>
          </ToolRows>
        </GroupBody>
        <GroupFooter $launch>
          Alignment
          <LauncherIcon />
        </GroupFooter>
      </Group>

      <Group $w={140}>
        <GroupBody>
          <ToolRows>
            <ToolRow>
              <Combo $w={132}>
                General
                <Caret />
              </Combo>
            </ToolRow>
            <ToolRow>
              <Slot $w={22}>
                <AccountingIcon />
              </Slot>
              <Slot $w={10}>
                <Caret />
              </Slot>
              <Slot $w={26}>
                <Glyph $size={15}>%</Glyph>
              </Slot>
              <Slot $w={20}>
                <Glyph $bold $size={14} $raise={9}>
                  ,
                </Glyph>
              </Slot>
              <Slot $w={14}>
                <Sep />
              </Slot>
              <Slot $w={20}>
                <DecimalIcon />
              </Slot>
              <Slot $w={22}>
                <DecimalIcon flip />
              </Slot>
            </ToolRow>
          </ToolRows>
        </GroupBody>
        <GroupFooter $launch>
          Number
          <LauncherIcon />
        </GroupFooter>
      </Group>

      <Group $w={181}>
        <GroupBody>
          <Spacer $w={4} />
          <BigTool w={72} icon={<ConditionalIcon />} top="Conditional" bottom="Formatting" caret />
          <BigTool w={56} icon={<TableBrushIcon />} top="Format as" bottom="Table" caret />
          <BigTool w={44} icon={<TableBrushIcon tall />} top="Cell" bottom="Styles" caret />
        </GroupBody>
        <GroupFooter>Styles</GroupFooter>
      </Group>

      <Group $w={136}>
        <GroupBody>
          <Spacer $w={4} />
          <BigTool w={42} icon={<InsertIcon />} top="Insert" caret />
          <BigTool w={42} icon={<DeleteIcon />} top="Delete" caret />
          <BigTool w={42} icon={<FormatIcon />} top="Format" caret />
        </GroupBody>
        <GroupFooter>Cells</GroupFooter>
      </Group>

      <Group $w={187}>
        <GroupBody>
          <EditStack $w={94}>
            <EditRow>
              <SigmaIcon />
              <ToolLabel>AutoSum</ToolLabel>
              <Slot $w={20}>
                <Caret />
              </Slot>
            </EditRow>
            <EditRow>
              <FillDownIcon />
              <ToolLabel>Fill</ToolLabel>
              <Caret />
            </EditRow>
            <EditRow>
              <EraserIcon />
              <ToolLabel>Clear</ToolLabel>
              <Caret />
            </EditRow>
          </EditStack>
          <BigTool w={46} icon={<SortIcon />} top="Sort &" bottom="Filter" caret />
          <BigTool w={42} icon={<BinocularsIcon />} top="Find &" bottom="Select" caret />
        </GroupBody>
        <GroupFooter>Editing</GroupFooter>
      </Group>

      <Collapse width="9" height="6" viewBox="0 0 9 6">
        <path d="M1 5l3.500-3.500L8 5" fill="none" stroke="#666" strokeWidth="1.5" />
      </Collapse>
    </Ribbon>

    <FormulaBar>
      <NameBox>
        E12
        <Caret />
      </NameBox>
      <Dots>
        <svg width="3" height="11" viewBox="0 0 3 11">
          <path d="M1.500 0v2M1.500 4.500v2M1.500 9v2" stroke="#aaa" strokeWidth="1.500" />
        </svg>
      </Dots>
      <FxBox>
        <svg width="18" height="18" viewBox="0 0 18 18">
          <path d="M2 2l14 14M16 2L2 16" stroke="#c8c8c8" strokeWidth="2.500" />
        </svg>
        <svg width="20" height="18" viewBox="0 0 20 18">
          <path d="M2 10l5 6L18 3" fill="none" stroke="#c8c8c8" strokeWidth="3" />
        </svg>
        <FxText>fx</FxText>
      </FxBox>
      <FormulaInput>
        Totals
        <svg width="14" height="10" viewBox="0 0 14 10">
          <path d="M2 2l5 5 5-5" fill="none" stroke="#666" strokeWidth="2.500" />
        </svg>
      </FormulaInput>
    </FormulaBar>

    <SheetArea>
      <SheetGrid>
        <Corner>
          <svg width="11" height="11" viewBox="0 0 11 11">
            <path d="M11 0v11H0z" fill="#dcdcdc" />
          </svg>
        </Corner>
        {columns.map((c) => (
          <ColHead key={c} $on={c === "E"}>
            {c}
          </ColHead>
        ))}
        {rows.map((r) => (
          <React.Fragment key={r.n}>
            <RowHead $on={r.on}>{r.n}</RowHead>
            {r.cells.map((c, i) => (
              <Cell key={i} $kind={c.k} $span={c.span} $selected={c.selected}>
                {c.t}
                {c.selected && <FillHandle />}
              </Cell>
            ))}
          </React.Fragment>
        ))}
      </SheetGrid>
      <VScroll>
        <ScrollBtn>
          <Tri $dir="up" />
        </ScrollBtn>
        <VThumb />
        <VTrack />
        <ScrollBtn>
          <Tri $dir="down" />
        </ScrollBtn>
      </VScroll>
    </SheetArea>

    <TabsBar>
      <TabNav>
        <NavArrow $dir="left" />
        <NavArrow $dir="right" />
      </TabNav>
      <ActiveSheetTab>Expenses</ActiveSheetTab>
      <SheetTab $bg="#000080" $w={64} $gap={5}>
        Income
      </SheetTab>
      <SheetTab $bg="#800080" $w={155} $gap={0}>
        Profit - Loss Summary
      </SheetTab>
      <AddSheet>
        <svg width="17" height="17" viewBox="0 0 17 17">
          <circle cx="8.500" cy="8.500" r="7.500" fill="none" stroke="#777" strokeWidth="1.300" />
          <path d="M8.500 4v9M4 8.500h9" stroke="#777" strokeWidth="1.500" />
        </svg>
      </AddSheet>
      <HScroll>
        <HBtn>
          <Tri $dir="left" />
        </HBtn>
        <HThumb />
        <HTrack />
        <HBtn>
          <Tri $dir="right" />
        </HBtn>
      </HScroll>
    </TabsBar>

    <StatusBar>
      READY
      <StatusRight>
        <ViewBtn $on>
          <GridViewIcon />
        </ViewBtn>
        <ViewBtn>
          <PageViewIcon />
        </ViewBtn>
        <ViewBtn>
          <BreakViewIcon />
        </ViewBtn>
        <Spacer $w={1} />
        <ZoomSign>-</ZoomSign>
        <ZoomTrack>
          <ZoomThumb />
        </ZoomTrack>
        <ZoomSign>+</ZoomSign>
        <ZoomValue>115 %</ZoomValue>
      </StatusRight>
    </StatusBar>

    <Watermark>
      <WatermarkTitle>Activate Windows</WatermarkTitle>
      <WatermarkSub>Go to Settings to activate Windows.</WatermarkSub>
    </Watermark>
  </Window>
);

export default App;
